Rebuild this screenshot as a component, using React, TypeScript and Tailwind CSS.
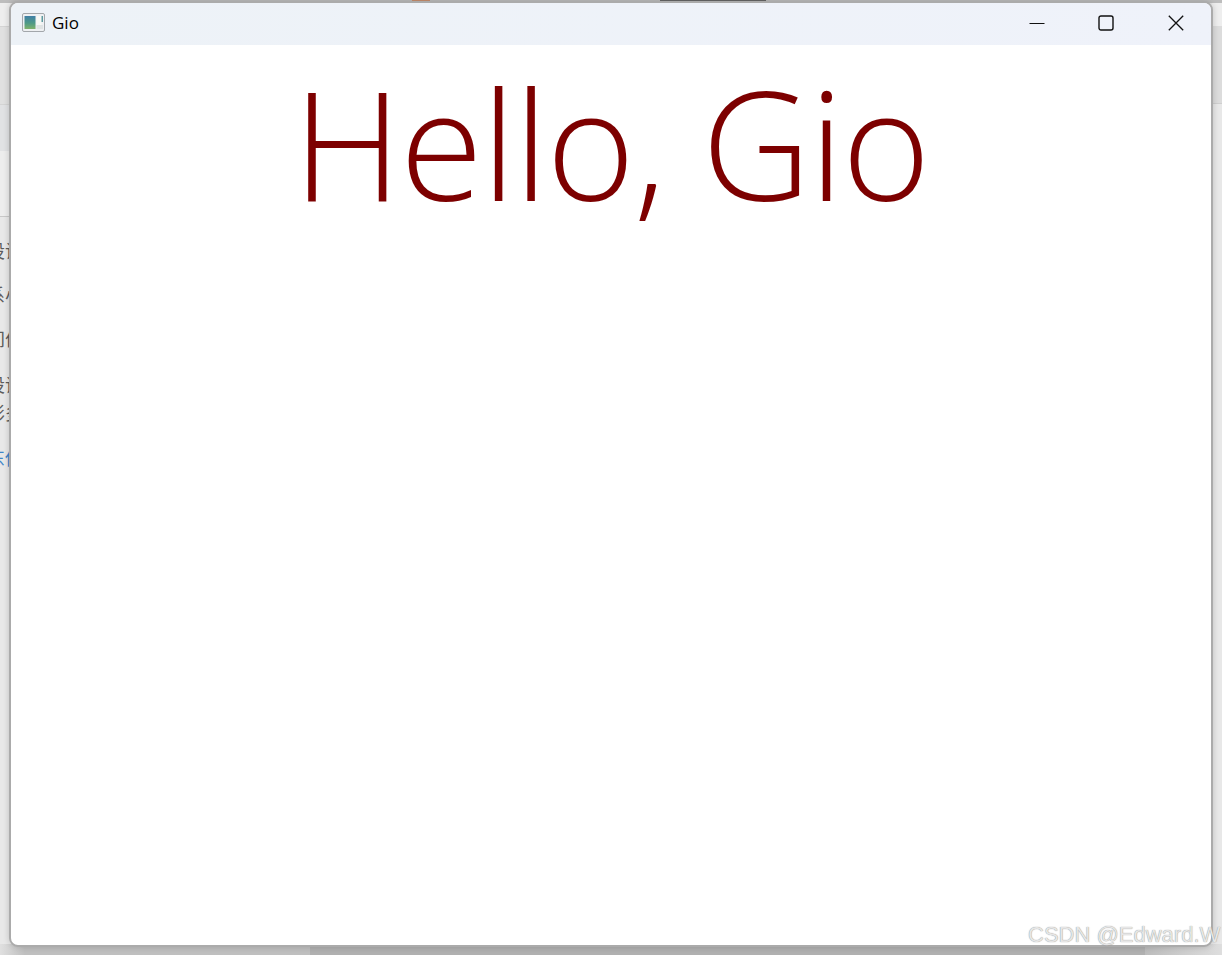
export default function App() {
  const bgRows: { t: string; mt: string; c: string }[] = [
    { t: "设设", mt: "mt-[238px]", c: "text-[#5c5c5c]" },
    { t: "系小", mt: "mt-[20px]", c: "text-[#5c5c5c]" },
    { t: "间价", mt: "mt-[20px]", c: "text-[#5c5c5c]" },
    { t: "设设", mt: "mt-[22px]", c: "text-[#5c5c5c]" },
    { t: "影多", mt: "mt-[4px]", c: "text-[#5c5c5c]" },
    { t: "东传", mt: "mt-[21px]", c: "text-[#3f86c9]" },
  ];
  return (
    <div className="relative h-[955px] w-[1222px] overflow-hidden bg-[#e8e8e8] font-['Open_Sans',sans-serif]">
      {/* Page behind the window: left edge */}
      <div className="absolute left-0 top-0 flex h-[217px] w-[10px] flex-col">
        <div className="h-[26px] bg-[#eeeeee]" />
        <div className="h-[78px] border-t border-[#d4d4d4] bg-[#e0e0e0]" />
        <div className="h-[47px] border-t border-[#d4d4d4] bg-[#e1e2e4]" />
        <div className="h-[66px] border-b border-[#c8c8c8] bg-[#ededed]" />
      </div>
      <div className="absolute left-0 top-0 flex h-[600px] w-[10px] flex-col overflow-hidden whitespace-nowrap font-['Noto_Sans_CJK_SC',serif] text-[18px] leading-[24px]">
        {bgRows.map((r, i) => (
          <div key={i} className={`${r.mt} ${r.c} ml-[-13px] shrink-0`}>
            {r.t}
          </div>
        ))}
      </div>
      {/* Page behind the window: right edge */}
      <div className="absolute right-0 top-0 flex h-[104px] w-[10px] flex-col">
        <div className="h-[26px] bg-[#eeeeee]" />
        <div className="h-[78px] border-b border-[#cfcfcf] bg-[#dcdcdc]" />
      </div>
      {/* Page behind the window: top and bottom slivers */}
      <div className="absolute left-0 top-0 h-[3px] w-full bg-[#bdbdbd]">
        <div className="ml-[412px] h-[2px] w-[18px] bg-[#c98f6e]" />
      </div>
      <div className="absolute left-[660px] top-0 h-px w-[106px] bg-[#666666]" />
      <div className="absolute bottom-0 left-0 flex h-[11px] w-full">
        <div className="w-[310px] bg-gradient-to-r from-[#e0e0e0] to-[#bfbfbf] to-[8%]" />
        <div className="flex-1 bg-[#b0b0b0]" />
        <div className="w-[77px] bg-gradient-to-r from-[#bcbcbc] to-[#dedede]" />
      </div>

      {/* Window */}
      <div className="absolute left-[9px] top-[1px] flex h-[946px] w-[1204px] flex-col overflow-hidden rounded-[9px] border-2 border-[#ababab] bg-white shadow-[0_0_6px_rgba(0,0,0,0.18)]">
        <div className="flex h-[42px] shrink-0 items-center bg-gradient-to-r from-[#edf2f7] to-[#eff2fa] pb-[3px] pl-[11px]">
          <svg width="24" height="20" viewBox="0 0 24 20" className="shrink-0">
            <defs>
              <linearGradient id="gio-left" x1="0" y1="0" x2="0" y2="1">
                <stop offset="0" stopColor="#3f7fa6" />
                <stop offset="0.55" stopColor="#4f9a86" />
                <stop offset="1" stopColor="#7fb26a" />
              </linearGradient>
            </defs>
            <rect x="0.5" y="0.5" width="22" height="18" rx="1.5" fill="#eef0f2" stroke="#a3a7ab" />
            <rect x="2.5" y="3" width="11" height="13" fill="url(#gio-left)" />
            <rect x="14.5" y="3" width="5" height="9" fill="#f7f8f4" />
            <rect x="19.5" y="3" width="1.5" height="6" fill="#5d9aa0" />
            <rect x="14.5" y="12" width="6.5" height="4" fill="#dfe3e3" />
          </svg>
          <span className="ml-[6px] text-[17px] leading-none text-black">Gio</span>
          <div className="ml-auto flex items-center">
            <svg width="16" height="16" viewBox="0 0 16 16" className="mr-[53px]">
              <path d="M0.5 8.5H15.5" stroke="#111" strokeWidth="1" />
            </svg>
            <svg width="16" height="16" viewBox="0 0 16 16" className="mr-[54px]">
              <rect x="1" y="1" width="14" height="14" rx="2" fill="none" stroke="#111" strokeWidth="1.4" />
            </svg>
            <svg width="16" height="16" viewBox="0 0 16 16" className="mr-[27px]">
              <path d="M0.8 0.8L15.2 15.2M15.2 0.8L0.8 15.2" stroke="#111" strokeWidth="1.3" />
            </svg>
          </div>
        </div>
        <div className="flex flex-1 justify-center">
          <h1 className="mt-[-5px] h-fit whitespace-nowrap text-[151px] font-light leading-[205px] tracking-[-1.6px] text-[#7d0000]">
            Hello, Gio
          </h1>
        </div>
      </div>

      {/* Watermark */}
      <div className="absolute left-[1028px] top-[921px] whitespace-nowrap font-['Liberation_Sans',sans-serif] text-[22px] leading-[28px] text-[#e6e6e6] [text-shadow:0_0_1px_#7a7a7a]">
        CSDN @Edward.W
      </div>
    </div>
  );
}
